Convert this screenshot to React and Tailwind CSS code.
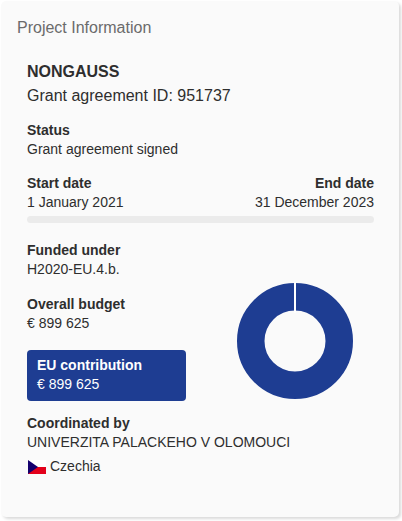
function Field({ label, children, className = "" }) {
  return (
    <div className={className}>
      <dt className="font-bold">{label}</dt>
      <dd>{children}</dd>
    </div>
  );
}

function BudgetChart() {
  return (
    <svg
      className="mt-[41px] mr-5 h-[118px] w-[118px] shrink-0"
      viewBox="0 0 118 118"
      role="img"
      aria-label="EU contribution share of the overall budget"
    >
      <circle cx="59" cy="59" r="44.25" fill="none" stroke="#1e3d92" strokeWidth="27.5" />
      <path d="M59 0V31" stroke="#ffffff" strokeWidth="2" />
    </svg>
  );
}

function CzechFlag() {
  return (
    <svg className="h-[14px] w-[18px]" viewBox="0 0 18 14" aria-hidden="true">
      <path d="M0 0H18V7H0Z" fill="#ffffff" />
      <path d="M0 7H18V14H0Z" fill="#e3001b" />
      <path d="M0 0L10 7L0 14Z" fill="#14006e" />
    </svg>
  );
}

export default function App() {
  return (
    <main className="bg-white pt-px pr-[3px] pb-1 pl-px font-['Liberation_Sans',Arial,sans-serif] text-sm leading-[19px] text-[#2e2e2e]">
      <section className="rounded-[5px] bg-[#fafafa] pt-[15px] pr-[15px] pb-[41px] pl-4 shadow-[2px_2px_3px_rgba(0,0,0,0.15)]">
        <h2 className="text-base text-[#6b6b6b]">Project Information</h2>
        <div className="mt-5 px-[10px]">
          <h3 className="text-base font-bold">NONGAUSS</h3>
          <p className="text-base">Grant agreement ID: 951737</p>

          <dl className="mt-[13px]">
            <Field label="Status">Grant agreement signed</Field>

            <div className="mt-[15px] flex justify-between">
              <Field label="Start date">1 January 2021</Field>
              <Field label="End date" className="text-right">
                31 December 2023
              </Field>
            </div>
          </dl>
          <div className="mt-1 h-[7px] rounded-full bg-[#ebebeb]" />

          <div className="mt-[18px] flex justify-between">
            <dl className="w-[159px]">
              <Field label="Funded under">H2020-EU.4.b.</Field>
              <Field label="Overall budget" className="mt-4">
                € 899 625
              </Field>
              <Field
                label="EU contribution"
                className="mt-[17px] rounded bg-[#1e3d92] px-[10px] pt-1.5 pb-[7px] text-white"
              >
                € 899 625
              </Field>
            </dl>
            <BudgetChart />
          </div>

          <dl className="mt-[13px]">
            <Field label="Coordinated by">UNIVERZITA PALACKEHO V OLOMOUCI</Field>
          </dl>
          <p className="mt-[5px] flex items-center gap-1 pl-px">
            <CzechFlag />
            Czechia
          </p>
        </div>
      </section>
    </main>
  );
}
